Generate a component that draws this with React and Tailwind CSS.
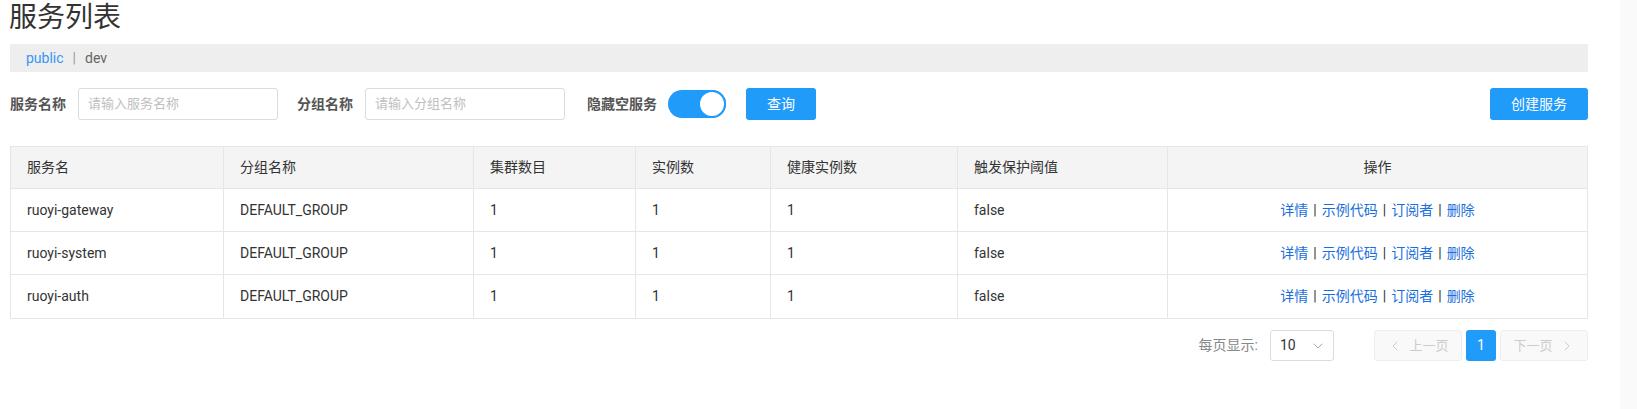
import { ChevronDown, ChevronLeft, ChevronRight } from "lucide-react";

const font = { fontFamily: "Roboto, 'Noto Sans CJK SC', sans-serif" };

const columns = [
  { title: "服务名", w: "w-[213px]" },
  { title: "分组名称", w: "w-[250px]" },
  { title: "集群数目", w: "w-[162px]" },
  { title: "实例数", w: "w-[135px]" },
  { title: "健康实例数", w: "w-[187px]" },
  { title: "触发保护阈值", w: "w-[210px]" },
];

const rows = [
  ["ruoyi-gateway", "DEFAULT_GROUP", "1", "1", "1", "false"],
  ["ruoyi-system", "DEFAULT_GROUP", "1", "1", "1", "false"],
  ["ruoyi-auth", "DEFAULT_GROUP", "1", "1", "1", "false"],
];

const actions = ["详情", "示例代码", "订阅者", "删除"];

export default function App() {
  return (
    <div className="flex w-[1637px] h-[409px] bg-white text-[#333]" style={font}>
      <div className="flex-1 pl-[10px] pr-[32px]">
        <h1 className="text-[28px] leading-[36px] font-normal text-[#333] -ml-[1px]">
          服务列表
        </h1>

        <div className="mt-[8px] h-[28px] bg-[#eeeeee] flex items-center pl-[16px] text-[14px]">
          <span className="text-[#3895f5]">public</span>
          <span className="mx-[9px] text-[#999]">|</span>
          <span className="text-[#666]">dev</span>
        </div>

        <div className="mt-[16px] flex items-center h-[32px]">
          <SearchField label="服务名称" placeholder="请输入服务名称" />
          <div className="w-[19px]" />
          <SearchField label="分组名称" placeholder="请输入分组名称" />
          <span className="ml-[22px] text-[14px] font-bold text-[#555]">隐藏空服务</span>
          <div className="ml-[11px] w-[58px] h-[28px] rounded-full bg-[#209bfa] flex justify-end">
            <div className="w-[28px] h-[28px] rounded-full bg-white border-2 border-[#209bfa]" />
          </div>
          <button className="ml-[20px] w-[70px] h-[32px] rounded-[3px] bg-[#209bfa] text-white text-[14px]">
            查询
          </button>
          <button className="ml-auto w-[98px] h-[32px] rounded-[3px] bg-[#209bfa] text-white text-[14px]">
            创建服务
          </button>
        </div>

        <div className="mt-[26px] border border-[#e6e6e6] text-[14px]">
          <div className="flex h-[42px] bg-[#f4f4f4] border-b border-[#e6e6e6]">
            {columns.map((c) => (
              <div
                key={c.title}
                className={`${c.w} flex items-center pl-[16px] border-r border-[#e6e6e6]`}
              >
                {c.title}
              </div>
            ))}
            <div className="flex-1 flex items-center justify-center">操作</div>
          </div>
          {rows.map((r, i) => (
            <div
              key={r[0]}
              className={`flex h-[43px] ${i < rows.length - 1 ? "border-b border-[#e6e6e6]" : ""}`}
            >
              {r.map((cell, j) => (
                <div
                  key={j}
                  className={`${columns[j].w} flex items-center pl-[16px] border-r border-[#e6e6e6]`}
                >
                  {cell}
                </div>
              ))}
              <div className="flex-1 flex items-center justify-center">
                {actions.map((a, k) => (
                  <span key={a} className="flex items-center">
                    {k > 0 && <span className="mx-[5px] text-[#333]">|</span>}
                    <a className="text-[#1a6fdc] cursor-pointer">{a}</a>
                  </span>
                ))}
              </div>
            </div>
          ))}
        </div>

        <div className="mt-[11px] flex items-center justify-end h-[31px] text-[14px]">
          <span className="text-[#888]">每页显示:</span>
          <div className="ml-[12px] w-[64px] h-[31px] border border-[#dcdcdc] rounded-[3px] flex items-center justify-between pl-[9px] pr-[7px]">
            <span className="text-[14px] text-[#333]">10</span>
            <ChevronDown className="w-[16px] h-[16px] text-[#aaa]" strokeWidth={1.5} />
          </div>
          <div className="ml-[40px] w-[88px] h-[31px] border border-[#eeeeee] bg-[#f9f9f9] rounded-[3px] flex items-center justify-center gap-[6px] text-[#ccc] text-[13px]">
            <ChevronLeft className="w-[16px] h-[16px]" strokeWidth={1.5} />
            <span>上一页</span>
          </div>
          <div className="ml-[4px] w-[30px] h-[31px] bg-[#209bfa] rounded-[3px] flex items-center justify-center text-white text-[14px]">
            1
          </div>
          <div className="ml-[4px] w-[88px] h-[31px] border border-[#eeeeee] bg-[#f9f9f9] rounded-[3px] flex items-center justify-center gap-[6px] text-[#ccc] text-[13px]">
            <span>下一页</span>
            <ChevronRight className="w-[16px] h-[16px]" strokeWidth={1.5} />
          </div>
        </div>
      </div>
      <div className="w-[17px] h-[409px] bg-[#fafafa]" />
    </div>
  );
}

function SearchField({ label, placeholder }) {
  return (
    <div className="flex items-center">
      <span className="text-[14px] font-bold text-[#555] w-[58px]">{label}</span>
      <div className="ml-[10px] w-[200px] h-[32px] border border-[#dcdcdc] rounded-[3px] flex items-center pl-[9px]">
        <input
          className="w-full outline-none text-[13px] placeholder:text-[#c0c0c0] bg-transparent"
          placeholder={placeholder}
        />
      </div>
    </div>
  );
}
